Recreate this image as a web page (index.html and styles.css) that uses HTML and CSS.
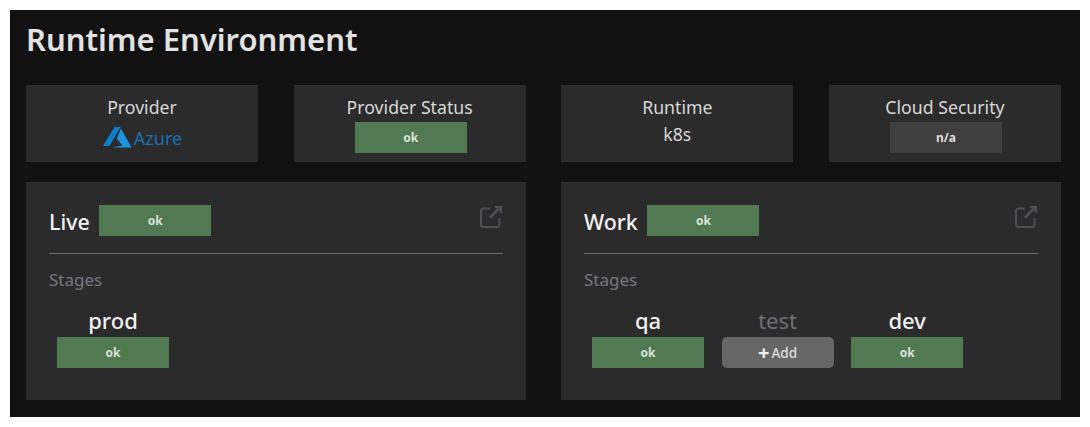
FILE: index.html
```html
<!DOCTYPE html>
<html lang="en">

<head>
    <meta charset="UTF-8">
    <title>Runtime Environment</title>
    <link rel="stylesheet" href="styles.css">
</head>

<body>
    <main class="frame">
        <h1 class="title">Runtime Environment</h1>

        <div class="cards">
            <div class="card">
                <div class="card-label">Provider</div>
                <div class="azure">
                    <svg class="azure-logo" width="29" height="22" viewBox="0 0 29 22">
                        <path d="M11.5 1 L17.6 1 L6.5 20 L0 20 Z" fill="#0a7fd0" />
                        <path d="M17.9 2.5 L28.6 21.5 L9 21.5 L19.5 19.4 L13.8 12.8 Z" fill="#1b93e0" />
                    </svg>
                    <span class="azure-name">Azure</span>
                </div>
            </div>
            <div class="card">
                <div class="card-label">Provider Status</div>
                <div class="badge ok">ok</div>
            </div>
            <div class="card">
                <div class="card-label">Runtime</div>
                <div class="card-value">k8s</div>
            </div>
            <div class="card">
                <div class="card-label">Cloud Security</div>
                <div class="badge na">n/a</div>
            </div>
        </div>

        <div class="panels">
            <section class="panel">
                <div class="panel-head">
                    <span class="panel-name">Live</span>
                    <div class="badge ok">ok</div>
                    <svg class="open-icon" width="22" height="22" viewBox="0 0 22 22">
                        <path d="M10 2.5 H3.5 Q1 2.5 1 5 V18.5 Q1 21 3.5 21 H17 Q19.5 21 19.5 18.5 V12" />
                        <path class="arrow" d="M10 11.5 L20 1.5 M15 1 H21 V7" />
                    </svg>
                </div>
                <div class="stages-label">Stages</div>
                <div class="stages">
                    <div class="stage">
                        <div class="stage-name">prod</div>
                        <div class="badge ok">ok</div>
                    </div>
                </div>
            </section>

            <section class="panel">
                <div class="panel-head">
                    <span class="panel-name">Work</span>
                    <div class="badge ok">ok</div>
                    <svg class="open-icon" width="22" height="22" viewBox="0 0 22 22">
                        <path d="M10 2.5 H3.5 Q1 2.5 1 5 V18.5 Q1 21 3.5 21 H17 Q19.5 21 19.5 18.5 V12" />
                        <path class="arrow" d="M10 11.5 L20 1.5 M15 1 H21 V7" />
                    </svg>
                </div>
                <div class="stages-label">Stages</div>
                <div class="stages">
                    <div class="stage">
                        <div class="stage-name">qa</div>
                        <div class="badge ok">ok</div>
                    </div>
                    <div class="stage">
                        <div class="stage-name muted">test</div>
                        <div class="badge add"><span class="plus">+</span> Add</div>
                    </div>
                    <div class="stage">
                        <div class="stage-name">dev</div>
                        <div class="badge ok">ok</div>
                    </div>
                </div>
            </section>
        </div>
    </main>
</body>

</html>
```

FILE: styles.css
```css
body {
    font-family: "Noto Sans", "Open Sans", sans-serif;
    background: #ffffff;
    margin: 0;
    padding: 10px;
    height: 427px;
    box-sizing: border-box;
    overflow: hidden;
}

.frame {
    background: #111111;
    height: 407px;
    padding: 0 19px 0 16px;
    box-sizing: border-box;
}

.title {
    margin: 0;
    padding-top: 9px;
    height: 75px;
    box-sizing: border-box;
    color: #e2e2e2;
    font-size: 31px;
    line-height: 41px;
    font-weight: 600;
}

.cards {
    display: grid;
    grid-template-columns: repeat(4, 232px);
    justify-content: space-between;
    margin-bottom: 20px;
}

.card {
    background: #2b2b2b;
    height: 77px;
    display: flex;
    flex-direction: column;
    align-items: center;
    padding-top: 9px;
    box-sizing: border-box;
    color: #d8d8d8;
}

.card-label {
    font-size: 17.7px;
    line-height: 26px;
}

.card-value {
    font-size: 17.7px;
    line-height: 28px;
}

.card .badge {
    margin-left: 2px;
    margin-top: 2px;
}

.azure {
    display: flex;
    align-items: center;
    gap: 2px;
    margin-left: 1px;
    color: #1a6fb0;
    font-size: 18px;
    line-height: 30px;
}

.azure-name {
    padding-top: 3px;
}

.badge {
    width: 112px;
    height: 31px;
    display: flex;
    align-items: center;
    justify-content: center;
    font-size: 12px;
    font-weight: 700;
    color: #d9e2d9;
}

.ok {
    background: #517a53;
}

.na {
    background: #3f3f3f;
    color: #dddddd;
}

.add {
    background: #666666;
    border-radius: 5px;
    color: #e0e0e0;
    font-size: 13.5px;
    font-weight: 500;
    gap: 2px;
}

.plus {
    font-size: 20px;
    line-height: 17px;
    font-weight: 700;
    color: #f0f0f0;
}

.panels {
    display: grid;
    grid-template-columns: repeat(2, 500px);
    justify-content: space-between;
}

.panel {
    background: #2b2b2b;
    height: 218px;
    padding: 23px 23px 0;
    box-sizing: border-box;
}

.panel-head {
    display: flex;
    align-items: center;
    gap: 9.6px;
    height: 49px;
    padding-bottom: 17px;
    box-sizing: border-box;
    border-bottom: 1px solid #6b6e72;
}

.panel-name {
    color: #f2f2f2;
    font-size: 21.4px;
    font-weight: 500;
    line-height: 31px;
    padding-top: 2px;
}

.open-icon {
    margin-left: auto;
    margin-right: 1px;
    margin-top: -7px;
    fill: none;
    stroke: #4d5156;
    stroke-width: 2;
}

.open-icon .arrow {
    stroke-width: 2.5;
}

.stages-label {
    color: #747980;
    font-size: 17px;
    line-height: 22px;
    margin-top: 15px;
}

.stages {
    display: flex;
    gap: 17.6px;
    padding-left: 8px;
    margin-top: 13px;
}

.stage {
    display: flex;
    flex-direction: column;
    align-items: center;
}

.stage-name {
    color: #f0f0f0;
    font-size: 22px;
    font-weight: 500;
    line-height: 33px;
}

.muted {
    color: #6d7278;
    font-weight: 400;
}
```
